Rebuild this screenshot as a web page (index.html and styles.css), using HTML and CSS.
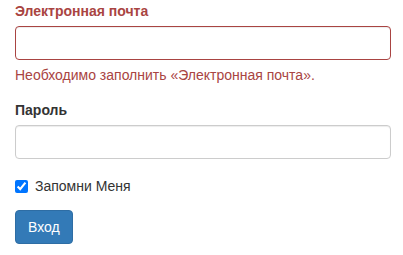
FILE: index.html
```html
<!DOCTYPE html>
<html lang="ru">
<head>
<meta charset="utf-8">
<link rel="stylesheet" href="styles.css">
</head>
<body>
<form class="login-form">
  <div class="form-group has-error">
    <label class="control-label" for="email">Электронная почта</label>
    <input class="form-control" id="email" type="text">
    <p class="help-block">Необходимо заполнить «Электронная почта».</p>
  </div>
  <div class="form-group">
    <label class="control-label" for="password">Пароль</label>
    <input class="form-control" id="password" type="password">
  </div>
  <div class="checkbox">
    <label class="checkbox-label"><input type="checkbox" checked class="checkbox-input"> Запомни Меня</label>
  </div>
  <div class="form-actions">
    <button type="submit" class="btn btn-primary">Вход</button>
  </div>
</form>
</body>
</html>
```
FILE: styles.css
```css
html, body {
  margin: 0;
  padding: 0;
  background: #fff;
}
body {
  font-family: "Liberation Sans", Arial, Helvetica, sans-serif;
  font-size: 14px;
  line-height: 20px;
  color: #333;
}
.login-form {
  width: 376px;
  padding: 1px 0 0 15px;
}
.form-group {
  margin-bottom: 15px;
}
.control-label {
  display: block;
  font-weight: bold;
  margin-bottom: 5px;
}
.form-control {
  display: block;
  box-sizing: border-box;
  width: 100%;
  height: 34px;
  padding: 6px 12px;
  font: inherit;
  color: #555;
  background: #fff;
  border: 1px solid #ccc;
  border-radius: 4px;
  box-shadow: inset 0 1px 1px rgba(0,0,0,.075);
  margin: 0;
}
.has-error .control-label,
.has-error .help-block {
  color: #a94442;
}
.has-error .form-control {
  border-color: #a94442;
}
.help-block {
  margin: 5px 0 10px;
}
.checkbox {
  margin: 0 0 14px;
  min-height: 20px;
}
.checkbox-label {
  display: flex;
  align-items: center;
  gap: 7px;
  padding-top: 2px;
  height: 20px;
}
.checkbox-input {
  margin: 0;
  width: 13px;
  height: 13px;
}
.btn {
  display: inline-block;
  height: 34px;
  padding: 6px 12px;
  font: inherit;
  border: 1px solid transparent;
  border-radius: 4px;
  cursor: pointer;
}
.btn-primary {
  color: #fff;
  background: #337ab7;
  border-color: #2e6da4;
}
```
